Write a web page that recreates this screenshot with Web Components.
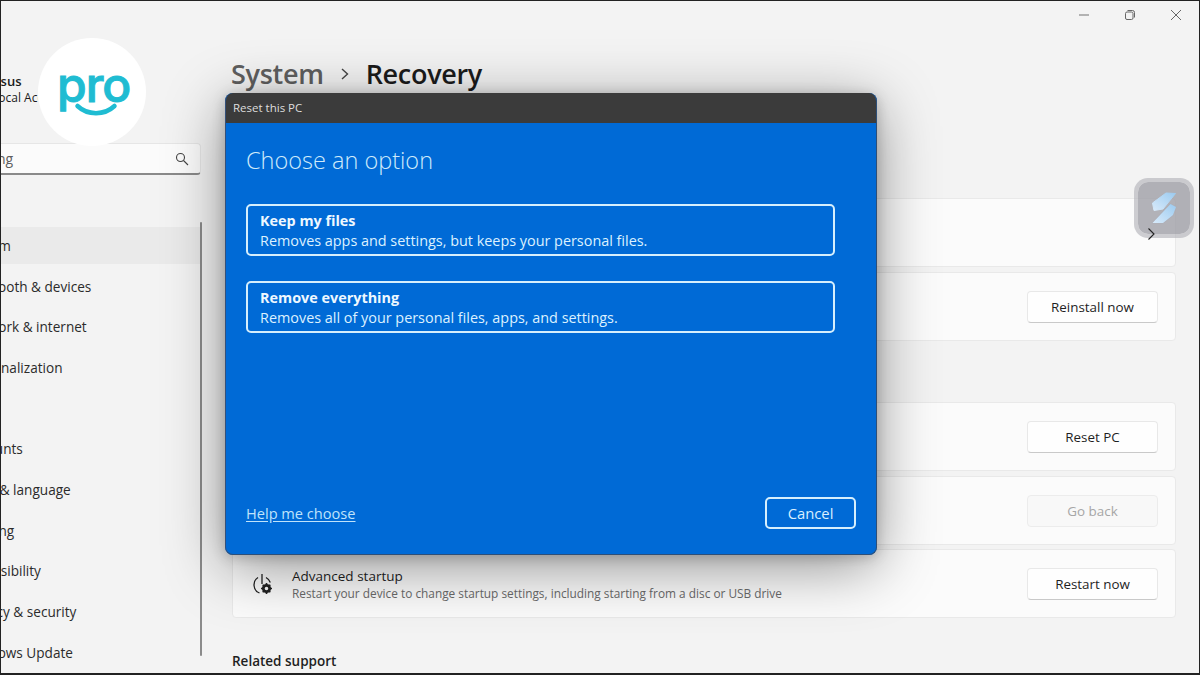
<!DOCTYPE html>
<html lang="en"><head><meta charset="utf-8"><title>Recovery</title>
<style>
html,body{margin:0;height:100%;overflow:hidden}
body{font-family:"Open Sans","Noto Sans","Liberation Sans",sans-serif;background:#f3f3f3;color:#1b1b1b}
</style></head><body>
<win-shell>
  <side-nav slot="side" user="Asus" account="Local Account">
    <nav-item>System</nav-item>
    <nav-item>Bluetooth &amp; devices</nav-item>
    <nav-item>Network &amp; internet</nav-item>
    <nav-item>Personalization</nav-item>
    <nav-item>Apps</nav-item>
    <nav-item>Accounts</nav-item>
    <nav-item>Time &amp; language</nav-item>
    <nav-item>Gaming</nav-item>
    <nav-item>Accessibility</nav-item>
    <nav-item>Privacy &amp; security</nav-item>
    <nav-item>Windows Update</nav-item>
  </side-nav>
  <settings-card h="69"><span slot="action" style="position:relative;z-index:5"><svg width="10" height="14" viewBox="0 0 10 14" fill="none" stroke="#222" stroke-width="1.100" style="display:block;margin:2px 2px 0 0"><path d="M2.500 1.500 8 7l-5.500 5.500"/></svg></span></settings-card>
  <settings-card h="69" style="margin-top:5px"><win-button slot="action">Reinstall now</win-button></settings-card>
  <settings-card h="69" style="margin-top:61px"><win-button slot="action">Reset PC</win-button></settings-card>
  <settings-card h="69" style="margin-top:5px"><win-button slot="action" disabled>Go back</win-button></settings-card>
  <settings-card h="69" style="margin-top:4px" label="Advanced startup" desc="Restart your device to change startup settings, including starting from a disc or USB drive">
    <svg slot="icon" width="24" height="24" viewBox="0 0 24 24" fill="none" stroke="#222" stroke-width="1.300"><path d="M8 5.500A8.800 8.800 0 0 0 9.500 21"/><path d="M12 2v10"/><path d="M16 5.500a8.800 8.800 0 0 1 4.300 5"/><circle cx="16.500" cy="16.500" r="3.200" stroke-width="2.800"/><path d="M16.500 11v2M16.500 20v2M11 16.500h2M20 16.500h2M12.700 12.700l1.400 1.400M18.900 18.900l1.400 1.400M12.700 20.300l1.400-1.400M18.900 14.100l1.400-1.400" stroke-width="1.600"/></svg>
    <win-button slot="action">Restart now</win-button>
  </settings-card>
  <section-heading>Related support</section-heading>
</win-shell>
<reset-dialog>
  <option-card name="Keep my files" desc="Removes apps and settings, but keeps your personal files."></option-card>
  <option-card name="Remove everything" desc="Removes all of your personal files, apps, and settings."></option-card>
</reset-dialog>
<pro-badge></pro-badge>
<float-widget></float-widget>
<script>
function def(name, css, html, init){
  customElements.define(name, class extends HTMLElement{
    connectedCallback(){
      if(this.shadowRoot) return;
      const r=this.attachShadow({mode:'open'});
      r.innerHTML='<style>'+css+'</style>'+(typeof html==='function'?html(this):html);
      if(init) init(this,r);
    }
  });
}
def('win-shell',`
  :host{display:grid;grid-template-columns:204px 1fr;box-sizing:border-box;width:1200px;height:675px;border:1px solid #222;border-bottom-width:2px;background:#f3f3f3;overflow:hidden}
  .main{min-width:0;padding:0 23px 0 27px;display:flex;flex-direction:column}
  .ctl{display:flex;justify-content:flex-end;margin-right:-23px;height:28px}
  .ctl span{width:46px;height:28px;display:flex;align-items:center;justify-content:center}
  h1{margin:27px 0 0 -1px;height:36px;display:flex;align-items:center;gap:16px;font-size:27px;font-weight:600;letter-spacing:-.3px;line-height:36px}
  h1 .p{color:#5f5f5f}
  .cards{margin-top:106px;display:flex;flex-direction:column}
`,`<slot name="side"></slot><div class="main">
  <div class="ctl">
   <span><svg width="12" height="12" fill="none" stroke="#888" stroke-width="1.200"><path d="M1 6h10"/></svg></span>
   <span><svg width="12" height="12" viewBox="0 0 12 12" fill="none" stroke="#666"><rect x="1.500" y="3" width="7.500" height="7.500" rx="1.500"/><path d="M3.500 1.500h5a2 2 0 0 1 2 2v5"/></svg></span>
   <span><svg width="12" height="12" fill="none" stroke="#666"><path d="M1 1l10 10M11 1 1 11"/></svg></span>
  </div>
  <h1><span class="p">System</span><svg width="10" height="14" fill="none" stroke="#444" stroke-width="1.400" viewBox="0 0 10 14"><path d="M2 2l5.500 5L2 12"/></svg><span>Recovery</span></h1>
  <div class="cards"><slot></slot></div>
</div>`);
def('side-nav',`
  :host{display:block;position:relative;overflow:hidden;font-size:14px}
  .user{margin:72px 0 0 -9px;width:46px;height:32px;line-height:16px;font-size:12px;white-space:nowrap;overflow:hidden}
  .user b{display:block;font-weight:600;font-size:13px;margin-bottom:1px;}
  .search{margin:38px 4px 0 -8px;height:32px;box-sizing:border-box;background:#fbfbfb;border:1px solid #e6e6e6;border-bottom:2px solid #8a8a8a;border-radius:4px;display:flex;align-items:center;justify-content:space-between;padding:0 11px 0 0;font-size:14px;color:#5e5e5e}
  .search span{margin-left:-68px;white-space:nowrap}
  nav{margin-top:52px;display:grid;grid-auto-rows:36.7px;row-gap:4px;margin-right:4px}
  .bar{position:absolute;left:199px;top:221px;width:2px;height:434px;background:#8b8b8b;border-radius:1px}
`,h=>`<div class="user"><b>${h.getAttribute('user')}</b>${h.getAttribute('account')}</div>
  <div class="search"><span>Find a setting</span><svg width="14" height="14" viewBox="0 0 14 14" fill="none" stroke="#444" stroke-width="1.100"><circle cx="5.500" cy="5.500" r="4"/><path d="M8.500 8.500l4.500 4.500"/></svg></div>
  <nav><slot></slot></nav><div class="bar"></div>`);
def('nav-item',`
  :host{display:flex;align-items:center;white-space:nowrap;font-size:13.600px;color:#2b2b2b}
  :host(:first-child){background:#eaeaea}
  span{margin-left:-36px}
`,`<span><slot></slot></span>`);
def('settings-card',`
  :host{display:flex;align-items:center;box-sizing:border-box;background:#fbfbfb;border:1px solid #e9e9e9;border-radius:4px;padding:0 17px 0 17px;flex:none}
  .icon{width:26px;display:flex;margin-right:16px}
  .t{flex:1;min-width:0}
  .l{font-size:13.500px;color:#1f1f1f;line-height:18px}
  .d{font-size:11.850px;color:#6a6a6a;line-height:16px}
`,h=>`<div class="icon"><slot name="icon"></slot></div><div class="t">${h.getAttribute('label')?`<div class="l">${h.getAttribute('label')}</div><div class="d">${h.getAttribute('desc')}</div>`:''}</div><slot name="action"></slot>`,
 h=>{h.style.height=h.getAttribute('h')+'px'});
def('win-button',`
  :host{display:flex;align-items:center;justify-content:center;box-sizing:border-box;width:131px;height:32px;background:#fefefe;border:1px solid #e8e8e8;border-bottom-color:#c9c9c9;border-radius:4px;font-size:13.400px;color:#1f1f1f}
  :host([disabled]){background:#f8f8f8;color:#a6a6a6;border-color:#ececec}
`,`<slot></slot>`);
def('section-heading',`
  :host{display:block;margin-top:34px;font-size:13.500px;font-weight:600;color:#1f1f1f;line-height:18px}
`,`<slot></slot>`);
def('reset-dialog',`
  :host{position:absolute;left:225px;top:93px;width:652px;height:462px;box-sizing:border-box;display:flex;flex-direction:column;border-radius:8px;background:#006ad6;color:#d8efff;box-shadow:0 12px 60px rgba(0,0,0,.42),0 2px 14px rgba(0,0,0,.2)}
  .in{flex:1;display:flex;flex-direction:column;min-height:0;border-radius:8px;overflow:hidden;border:1px solid #2d4f78;border-top:0;border-left-color:#34507a;box-sizing:border-box}
  .tb{height:29px;padding-bottom:1px;flex:none;background:#3b3b3b;color:#dedede;font-size:11.500px;display:flex;align-items:center;padding-left:7px}
  .body{flex:1;display:flex;flex-direction:column;padding:0 20px 25px 20px}
  h2{margin:21px 0 0;font-size:23.500px;font-weight:300;line-height:32px;color:#cfeafb}
  .opts{margin:28px 21px 0 0;display:flex;flex-direction:column;gap:25px}
  .foot{margin-top:auto;display:flex;justify-content:space-between;align-items:center}
  a{font-size:14.600px;color:#bfe3fb;text-decoration:underline;text-underline-offset:2px}
  .c{box-sizing:border-box;width:91px;height:32px;border:2px solid #d6effd;border-radius:5px;display:flex;align-items:center;justify-content:center;font-size:14.800px;color:#d8efff}
`,`<div class="in"><div class="tb">Reset this PC</div><div class="body"><h2>Choose an option</h2><div class="opts"><slot></slot></div>
 <div class="foot"><a>Help me choose</a><span class="c">Cancel</span></div></div></div>`);
def('option-card',`
  :host{display:block;box-sizing:border-box;height:52px;border:2px solid #d6effd;border-radius:5px;padding:5px 12px;font-size:14.400px;line-height:20px;color:#dcf1ff}
  b{display:block;font-weight:700;color:#eef8ff}
`,h=>`<b>${h.getAttribute('name')}</b>${h.getAttribute('desc')}`);
def('pro-badge',`
  :host{position:absolute;left:38px;top:38px;width:108px;height:108px;border-radius:50%;background:#fff;display:block}
  svg{display:block}
  text{font-family:"Inter","Open Sans",sans-serif;font-weight:500;font-size:48px;fill:#1fbcd2;letter-spacing:-1px}
`,`<svg width="108" height="108" viewBox="0 0 108 108"><text x="19" y="64" stroke="#1fbcd2" stroke-width="1">pro</text><path d="M39.500 68c10 9.500 27 9.500 37 0" fill="none" stroke="#1fbcd2" stroke-width="4.500" stroke-linecap="round"/></svg>`);
def('float-widget',`
  :host{position:absolute;left:1134px;top:178px;width:60px;height:60px;box-sizing:border-box;border-radius:14px;background:rgba(154,154,162,.75);background-clip:padding-box;border:4px solid rgba(175,175,182,.6);display:block}
  svg{position:absolute;left:-4px;top:-4px}
`,`<svg width="60" height="60" viewBox="0 0 60 60"><defs><linearGradient id="g" x1="0" y1="1" x2="1" y2="0"><stop offset="0" stop-color="#d8eafa"/><stop offset="1" stop-color="#9ccbf0"/></linearGradient></defs><path d="M32 15 41.500 15.500 29 31 20 32.500 18.500 25z" fill="url(#g)" stroke="url(#g)" stroke-linejoin="round"/><path d="M36.500 26 42 29 39 37 29 45H18.500z" fill="url(#g)" stroke="#aeaeb6" stroke-width="1.200" stroke-linejoin="round" paint-order="stroke"/></svg>`);
</script>
</body></html>
